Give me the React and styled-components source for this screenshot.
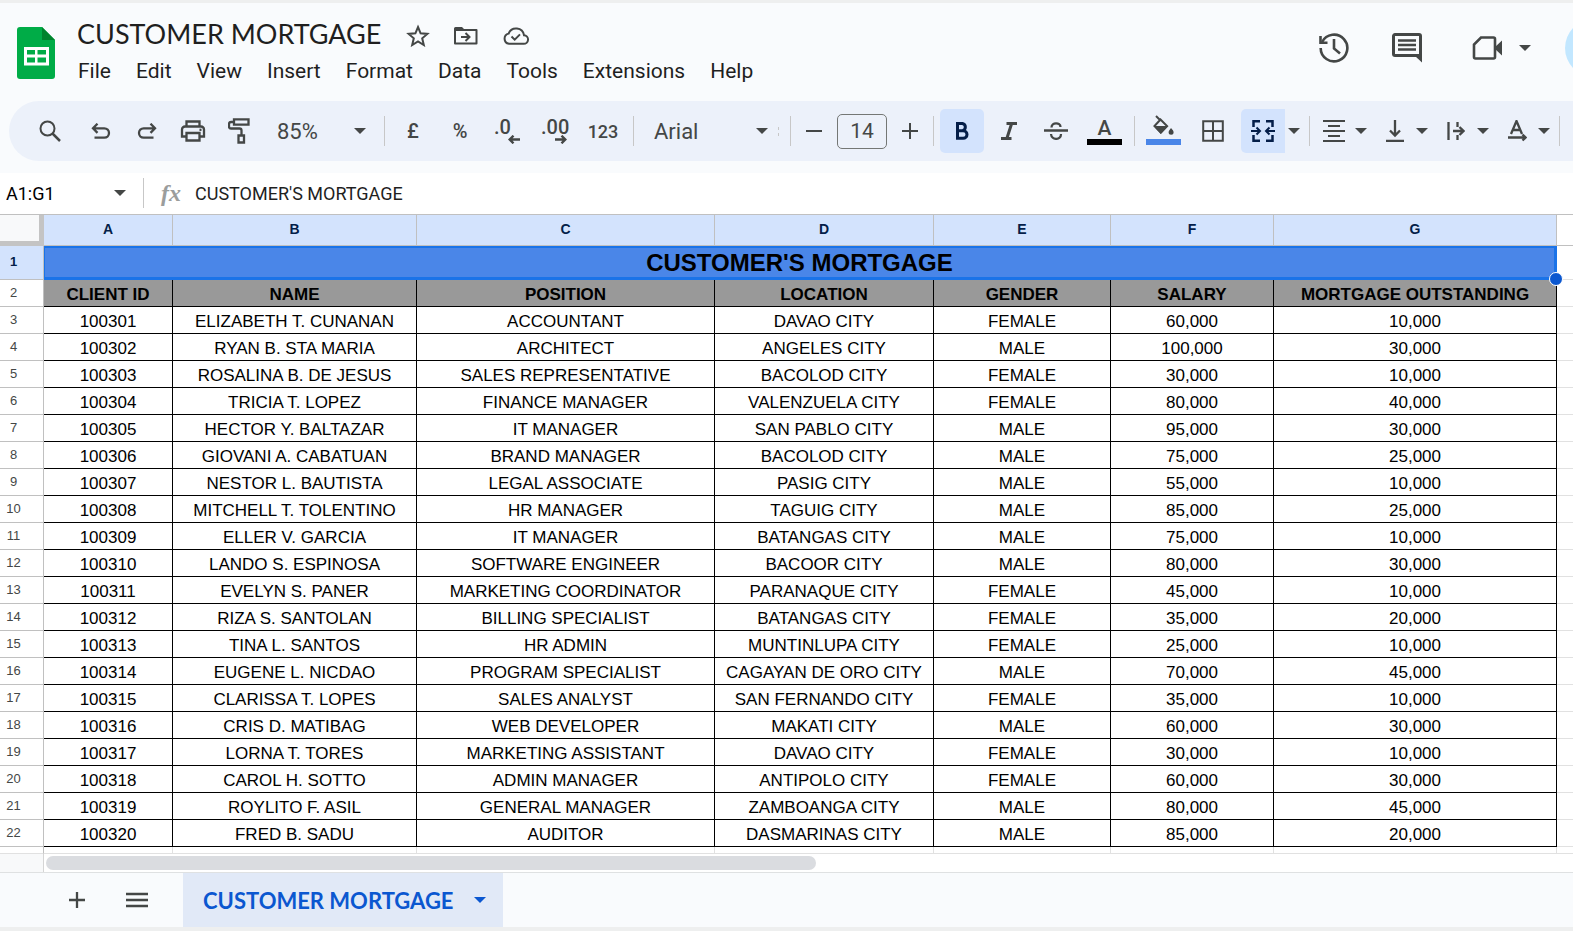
import React from "react";
import styled, { createGlobalStyle } from "styled-components";

const GlobalStyle = createGlobalStyle`
  body {
    margin: 0;
    background: #f9fbfd;
    overflow: hidden;
  }
  * {
    box-sizing: border-box;
  }
`;

const uiFont = `Roboto, "Liberation Sans", sans-serif`;
const cellFont = `"Liberation Sans", Arial, sans-serif`;

const Page = styled.div`
  min-height: 100vh;
  display: flex;
  flex-direction: column;
  border-top: 3px solid #eeefef;
  font-family: ${uiFont};
  color: #1f1f1f;
  overflow: hidden;
`;

const Header = styled.header`
  display: flex;
  align-items: flex-start;
  height: 98px;
  padding: 12px 0 0 17px;
`;

const Logo = styled.a`
  display: block;
  margin-top: 12px;
  height: 52px;
`;

const HeaderMain = styled.div`
  flex: 1;
  margin-left: 22px;
`;

const TitleRow = styled.div`
  display: flex;
  align-items: center;
  gap: 23px;
  height: 38px;
`;

const DocTitle = styled.input`
  width: 306px;
  padding: 0;
  border: 0;
  background: none;
  font-family: Lato, ${uiFont};
  font-size: 27px;
  line-height: 38px;
  color: #1f1f1f;
`;

const PlainButton = styled.button`
  display: flex;
  align-items: center;
  justify-content: center;
  padding: 0;
  border: 0;
  background: none;
  color: #444746;
`;

const TitleButton = styled(PlainButton)`
  padding-top: 3px;
`;

const Menu = styled.nav`
  display: flex;
  gap: 25px;
  padding: 4px 0 0 1px;
`;

const MenuItem = styled.button`
  padding: 0;
  border: 0;
  background: none;
  font-family: ${uiFont};
  font-size: 21px;
  line-height: 28px;
  color: #1f1f1f;
`;

const HeaderTools = styled.div`
  display: flex;
  align-items: center;
  height: 66px;
`;

const HeaderButton = styled(PlainButton)`
  height: 40px;
  margin-right: ${(p) => p.$after}px;
`;

const Avatar = styled.button`
  flex: none;
  width: 58px;
  height: 58px;
  margin-right: -50px;
  border: 0;
  border-radius: 50%;
  background: #c2e7ff;
`;

const Toolbar = styled.div`
  display: flex;
  align-items: center;
  height: 60px;
  margin: 0 0 12px 9px;
  padding-left: 19px;
  border-radius: 30px 0 0 30px;
  background: #ecf1fa;
`;

const Group = styled.div`
  display: flex;
  align-items: center;
  gap: ${(p) => p.$gap || 0}px;
`;

const Divider = styled.div`
  flex: none;
  width: 1px;
  height: 30px;
  margin: 0 6px;
  background: #c7c7c7;
`;

const DragMark = styled.div`
  flex: none;
  height: 9px;
  margin-right: 5px;
  border-left: 1px dashed #c7c7c7;
`;

const ToolButton = styled(PlainButton)`
  flex: none;
  width: ${(p) => p.$width || 44}px;
  height: 44px;
  border-radius: ${(p) => (p.$joined ? "5px 0 0 5px" : "5px")};
  background: ${(p) => (p.$on ? "#d3e3fd" : "none")};
  color: ${(p) => (p.$on ? "#041e49" : "#444746")};
  font-family: ${uiFont};
  font-size: ${(p) => p.$size || 18}px;
  font-weight: 500;
`;

const CaretButton = styled(PlainButton)`
  flex: none;
  width: ${(p) => p.$width || 18}px;
  height: 44px;
`;

const SelectWrap = styled.label`
  display: grid;
  align-items: center;
  width: ${(p) => p.$width}px;
  height: 44px;
  color: #444746;
  > * {
    grid-area: 1 / 1;
  }
  svg {
    justify-self: end;
    margin-right: ${(p) => p.$inset}px;
    pointer-events: none;
  }
`;

const Select = styled.select`
  appearance: none;
  width: 100%;
  height: 44px;
  padding: 0 0 0 14px;
  border: 0;
  background: none;
  font-family: ${uiFont};
  font-size: 22px;
  color: #444746;
`;

const SizeInput = styled.input`
  width: 50px;
  height: 35px;
  padding: 0;
  border: 1px solid #747775;
  border-radius: 5px;
  background: none;
  font-family: ${uiFont};
  font-size: 21px;
  text-align: center;
  color: #444746;
`;

const Decimal = styled.span`
  display: flex;
  flex-direction: column;
  width: 26px;
  font-size: 20px;
  line-height: 16px;
  text-align: left;
  svg {
    align-self: flex-end;
  }
`;

const ColorLabel = styled.span`
  display: flex;
  flex-direction: column;
  align-items: center;
  justify-content: flex-end;
  width: 35px;
  height: 32px;
  margin-bottom: 4px;
  border-bottom: 6px solid ${(p) => p.$color};
  font-size: 21px;
  line-height: 21px;
  svg {
    margin-bottom: 4px;
  }
`;

const FormulaBar = styled.div`
  display: flex;
  align-items: center;
  height: 42px;
  padding-bottom: 1px;
  border-bottom: 1px solid #c0c0c0;
  background: #fff;
`;

const NameBox = styled.input`
  width: 103px;
  padding: 0 0 0 6px;
  border: 0;
  background: none;
  font-family: ${uiFont};
  font-size: 18px;
  color: #000;
`;

const Fx = styled.span`
  width: 45px;
  padding-left: 11px;
  font-family: "Liberation Serif", serif;
  font-size: 24px;
  line-height: 30px;
  font-style: italic;
  font-weight: bold;
  color: #9b9d9c;
`;

const FormulaInput = styled.input`
  flex: 1;
  min-width: 0;
  padding: 0;
  border: 0;
  background: none;
  font-family: ${uiFont};
  font-size: 18px;
  color: #1f1f1f;
`;

const Grid = styled.table`
  width: 100%;
  table-layout: fixed;
  border-collapse: separate;
  border-spacing: 0;
  background: #fff;
  font-family: ${cellFont};
`;

const Corner = styled.td`
  height: 31px;
  padding: 0;
  background: #f8f9fa;
  border-right: 5px solid #c4c4c4;
  border-bottom: 5px solid #c4c4c4;
`;

const ColumnHead = styled.th`
  height: 31px;
  padding: 0 0 3px;
  border-right: 1px solid #c0c0c0;
  border-bottom: 1px solid #c0c0c0;
  background: #d3e3fd;
  font-size: 14px;
  color: #041e49;
`;

const RowHead = styled.th`
  padding: 0 16px 2px 0;
  border-right: 1px solid #c0c0c0;
  border-bottom: 1px solid #c0c0c0;
  background: ${(p) => (p.$on ? "#d3e3fd" : "#fff")};
  font-size: 13px;
  font-weight: ${(p) => (p.$on ? "bold" : "normal")};
  color: ${(p) => (p.$on ? "#041e49" : "#444746")};
`;

const Cell = styled.td`
  height: 27px;
  padding: 4px 0 0;
  border-right: 1px solid #000;
  border-bottom: 1px solid #000;
  background: ${(p) => (p.$heading ? "#999" : "#fff")};
  font-size: 17px;
  line-height: 20px;
  font-weight: ${(p) => (p.$heading ? "bold" : "normal")};
  text-align: center;
  white-space: nowrap;
  color: #000;
`;

const MergedCell = styled.td`
  position: relative;
  height: 34px;
  padding: 0;
  border: solid #1a73e8;
  border-width: 2px 3px 3px 1px;
  background: #4a86e8;
  font-size: 24px;
  line-height: 28px;
  font-weight: bold;
  text-align: center;
  color: #000;
`;

const FillHandle = styled.span`
  position: absolute;
  right: -9px;
  bottom: -9px;
  width: 14px;
  height: 14px;
  border: 1px solid #fff;
  border-radius: 50%;
  background: #0b57d0;
`;

const BlankCell = styled.td`
  padding: 0;
  border-bottom: 1px solid ${(p) => (p.$head ? "#c0c0c0" : "#e1e1e1")};
`;

const StubCell = styled.td`
  height: 7px;
  padding: 0;
  border-right: 1px solid ${(p) => (p.$head ? "#c0c0c0" : "#e1e1e1")};
  border-bottom: 1px solid #e1e1e1;
  &:last-child {
    border-right: 0;
  }
`;

const ScrollRow = styled.div`
  display: flex;
  align-items: center;
  height: 19px;
  border-bottom: 1px solid #dfe1e2;
  background: #fff;
`;

const ScrollCorner = styled.div`
  width: 44px;
  height: 18px;
  border-right: 1px solid #d5d5d5;
  background: #f8f9fa;
`;

const Track = styled.div`
  flex: 1;
  padding-left: 2px;
`;

const Thumb = styled.div`
  width: 50.4%;
  height: 14px;
  border-radius: 7px;
  background: #dadce0;
`;

const TabBar = styled.footer`
  display: flex;
  flex: 1;
  border-bottom: 4px solid #eeefef;
`;

const TabTool = styled(PlainButton)`
  width: 60px;
`;

const SheetTab = styled.button`
  display: flex;
  align-items: center;
  gap: 20px;
  margin-left: 16px;
  padding: 0 17px 0 20px;
  border: 0;
  background: #e1e9f7;
  font-family: Lato, ${uiFont};
  font-size: 22px;
  font-weight: bold;
  color: #0b57d0;
`;

const TabTools = styled.div`
  display: flex;
  padding-left: 47px;
`;

const Icon = ({ w, h, children, stroke = 2 }) => (
  <svg
    width={w}
    height={h}
    viewBox={`0 0 ${w} ${h}`}
    fill="none"
    stroke="currentColor"
    strokeWidth={stroke}
    aria-hidden="true"
  >
    {children}
  </svg>
);

const Caret = () => (
  <Icon w={12} h={6}>
    <path d="M0 0h12L6 6z" fill="currentColor" stroke="none" />
  </Icon>
);

const menus = ["File", "Edit", "View", "Insert", "Format", "Data", "Tools", "Extensions", "Help"];

const columns = [
  { letter: "A", label: "CLIENT ID", width: 129 },
  { letter: "B", label: "NAME", width: 244 },
  { letter: "C", label: "POSITION", width: 298 },
  { letter: "D", label: "LOCATION", width: 219 },
  { letter: "E", label: "GENDER", width: 177 },
  { letter: "F", label: "SALARY", width: 163 },
  { letter: "G", label: "MORTGAGE OUTSTANDING", width: 283 },
];

const clients = [
  ["100301", "ELIZABETH T. CUNANAN", "ACCOUNTANT", "DAVAO CITY", "FEMALE", "60,000", "10,000"],
  ["100302", "RYAN B. STA MARIA", "ARCHITECT", "ANGELES CITY", "MALE", "100,000", "30,000"],
  ["100303", "ROSALINA B. DE JESUS", "SALES REPRESENTATIVE", "BACOLOD CITY", "FEMALE", "30,000", "10,000"],
  ["100304", "TRICIA T. LOPEZ", "FINANCE MANAGER", "VALENZUELA CITY", "FEMALE", "80,000", "40,000"],
  ["100305", "HECTOR Y. BALTAZAR", "IT MANAGER", "SAN PABLO CITY", "MALE", "95,000", "30,000"],
  ["100306", "GIOVANI A. CABATUAN", "BRAND MANAGER", "BACOLOD CITY", "MALE", "75,000", "25,000"],
  ["100307", "NESTOR L. BAUTISTA", "LEGAL ASSOCIATE", "PASIG CITY", "MALE", "55,000", "10,000"],
  ["100308", "MITCHELL T. TOLENTINO", "HR MANAGER", "TAGUIG CITY", "MALE", "85,000", "25,000"],
  ["100309", "ELLER V. GARCIA", "IT MANAGER", "BATANGAS CITY", "MALE", "75,000", "10,000"],
  ["100310", "LANDO S. ESPINOSA", "SOFTWARE ENGINEER", "BACOOR CITY", "MALE", "80,000", "30,000"],
  ["100311", "EVELYN S. PANER", "MARKETING COORDINATOR", "PARANAQUE CITY", "FEMALE", "45,000", "10,000"],
  ["100312", "RIZA S. SANTOLAN", "BILLING SPECIALIST", "BATANGAS CITY", "FEMALE", "35,000", "20,000"],
  ["100313", "TINA L. SANTOS", "HR ADMIN", "MUNTINLUPA CITY", "FEMALE", "25,000", "10,000"],
  ["100314", "EUGENE L. NICDAO", "PROGRAM SPECIALIST", "CAGAYAN DE ORO CITY", "MALE", "70,000", "45,000"],
  ["100315", "CLARISSA T. LOPES", "SALES ANALYST", "SAN FERNANDO CITY", "FEMALE", "35,000", "10,000"],
  ["100316", "CRIS D. MATIBAG", "WEB DEVELOPER", "MAKATI CITY", "MALE", "60,000", "30,000"],
  ["100317", "LORNA T. TORES", "MARKETING ASSISTANT", "DAVAO CITY", "FEMALE", "30,000", "10,000"],
  ["100318", "CAROL H. SOTTO", "ADMIN MANAGER", "ANTIPOLO CITY", "FEMALE", "60,000", "30,000"],
  ["100319", "ROYLITO F. ASIL", "GENERAL MANAGER", "ZAMBOANGA CITY", "MALE", "80,000", "45,000"],
  ["100320", "FRED B. SADU", "AUDITOR", "DASMARINAS CITY", "MALE", "85,000", "20,000"],
];

function TopHeader() {
  return (
    <Header>
      <Logo href="#" aria-label="Sheets home">
        <svg width="38" height="52" viewBox="0 0 38 52" aria-hidden="true">
          <path d="M3 0h22l13 13v36a3 3 0 0 1-3 3H3a3 3 0 0 1-3-3V3a3 3 0 0 1 3-3z" fill="#00ac47" />
          <path d="M25 0l13 13H25z" fill="#00832d" />
          <path
            fill="#fff"
            fillRule="evenodd"
            d="M7 20h25v18.500H7zM10 23v4.500h8V23zM20.500 23v4.500h8.500V23zM10 30.500v5h8v-5zM20.500 30.500v5h8.500v-5z"
          />
        </svg>
      </Logo>
      <HeaderMain>
        <TitleRow>
          <DocTitle aria-label="Document title" defaultValue="CUSTOMER MORTGAGE" />
          <TitleButton aria-label="Star">
            <Icon w={24} h={23}>
              <path d="M12 3l2.600 6.300 6.800.600-5.200 4.400 1.600 6.700-5.800-3.600-5.800 3.600 1.600-6.700-5.200-4.400 6.800-.600z" />
            </Icon>
          </TitleButton>
          <TitleButton aria-label="Move">
            <Icon w={26} h={20}>
              <path d="M2 4h21.500v13.500H2z" strokeLinejoin="round" />
              <path d="M1 5V2.500A1.500 1.500 0 0 1 2.500 1H9l3 3v1z" fill="currentColor" stroke="none" />
              <path d="M8 11h8M12.500 7l4 4-4 4" />
            </Icon>
          </TitleButton>
          <TitleButton aria-label="Document status">
            <Icon w={28} h={20}>
              <path d="M7 17.800h14.500a4.300 4.300 0 0 0 .500-8.600 8 8 0 0 0-15.400-1.600A5.200 5.200 0 0 0 7 17.800z" />
              <path d="M9.500 10.500l3.200 3.200 5.300-5.300" />
            </Icon>
          </TitleButton>
        </TitleRow>
        <Menu>
          {menus.map((m) => (
            <MenuItem key={m}>{m}</MenuItem>
          ))}
        </Menu>
      </HeaderMain>
      <HeaderTools>
        <HeaderButton $after={43} aria-label="Version history">
          <Icon w={30} h={30} stroke={2.6}>
            <path d="M3.100 9A13.330 13.330 0 1 1 1.670 15" />
            <path d="M1.500 3v6.700h7" />
            <path d="M15 6v9.500l6 5" />
          </Icon>
        </HeaderButton>
        <HeaderButton $after={50} aria-label="Comments">
          <Icon w={30} h={30} stroke={3}>
            <path d="M3 1.500h24a1.500 1.500 0 0 1 1.500 1.500v19.500H3A1.500 1.500 0 0 1 1.500 21V3A1.500 1.500 0 0 1 3 1.500z" />
            <path d="M23 23h7v6.500z" fill="currentColor" stroke="none" />
            <path d="M6 7.500h18M6 12h18M6 16.500h18" strokeWidth="2.500" />
          </Icon>
        </HeaderButton>
        <HeaderButton $after={17} aria-label="Join a call">
          <Icon w={30} h={24} stroke={2.6}>
            <path d="M9 1.500h12.500A1.500 1.500 0 0 1 23 3v18a1.500 1.500 0 0 1-1.500 1.500H3.500A1.500 1.500 0 0 1 2 21V8.500z" />
            <path d="M22 12l8-7.500v15z" fill="currentColor" stroke="none" />
          </Icon>
        </HeaderButton>
        <HeaderButton $after={34} aria-label="Call options">
          <Caret />
        </HeaderButton>
        <Avatar aria-label="Account" />
      </HeaderTools>
    </Header>
  );
}

function FormatToolbar() {
  return (
    <Toolbar role="toolbar">
      <Group $gap={7}>
        <ToolButton aria-label="Search">
          <Icon w={22} h={22}>
            <circle cx="8.500" cy="8.500" r="7" />
            <path d="M13.500 13.500l7.500 7.500" strokeWidth="2.500" />
          </Icon>
        </ToolButton>
        <Group $gap={2}>
          <ToolButton aria-label="Undo">
            <Icon w={20} h={16}>
              <path d="M6.500.700L2 5.300l4.500 4.600M2.500 5.300h10.800a4.700 4.700 0 0 1 0 9.400H3.500" strokeWidth="2.300" />
            </Icon>
          </ToolButton>
          <ToolButton aria-label="Redo">
            <Icon w={20} h={16}>
              <path d="M13.500.700L18 5.300l-4.500 4.600M17.500 5.300H6.700a4.700 4.700 0 0 0 0 9.400h9.800" strokeWidth="2.300" />
            </Icon>
          </ToolButton>
          <ToolButton aria-label="Print">
            <Icon w={26} h={22} stroke={2.3}>
              <path d="M6.500 6V1.500h13V6M6 16.500H2V9.500a3 3 0 0 1 3-3h16a3 3 0 0 1 3 3v7h-4" />
              <path d="M6.500 13h13v7.500h-13z" />
              <path d="M19.500 9.800h2" />
            </Icon>
          </ToolButton>
          <ToolButton aria-label="Paint format">
            <Icon w={22} h={26} stroke={2.300}>
              <path d="M6 1.300h14.500v5.400H6zM6 4H3a2 2 0 0 0-2 2v2.500a2 2 0 0 0 2 2h8.500a2 2 0 0 1 2 2V17M10.500 17.500h5.500v7h-5.500z" />
            </Icon>
          </ToolButton>
          <SelectWrap $width={115} $inset={12}>
            <Select aria-label="Zoom" defaultValue="85%">
              <option>85%</option>
              <option>100%</option>
            </Select>
            <Caret />
          </SelectWrap>
        </Group>
      </Group>
      <Divider />
      <Group $gap={3}>
        <ToolButton $size={20} aria-label="Format as currency">£</ToolButton>
        <ToolButton $size={20} aria-label="Format as percent">%</ToolButton>
        <ToolButton aria-label="Decrease decimal places">
          <Decimal>
            .0
            <Icon w={12} h={9} stroke={2.400}>
              <path d="M5.500.700L1.700 4.500l3.800 3.800M2 4.500h10" />
            </Icon>
          </Decimal>
        </ToolButton>
        <ToolButton aria-label="Increase decimal places">
          <Decimal>
            .00
            <Icon w={12} h={9} stroke={2.400}>
              <path d="M6.500.700l3.800 3.800-3.800 3.800M10 4.500H0" />
            </Icon>
          </Decimal>
        </ToolButton>
        <ToolButton $width={48} aria-label="More formats">123</ToolButton>
      </Group>
      <Divider />
      <SelectWrap $width={138} $inset={10}>
        <Select aria-label="Font" defaultValue="Arial">
          <option>Arial</option>
          <option>Roboto</option>
        </Select>
        <Caret />
      </SelectWrap>
      <DragMark />
      <Divider />
      <Group $gap={6}>
        <ToolButton $width={34} aria-label="Decrease font size">
          <Icon w={16} h={16}>
            <path d="M0 8h16" />
          </Icon>
        </ToolButton>
        <SizeInput aria-label="Font size" defaultValue="14" />
        <ToolButton $width={34} aria-label="Increase font size">
          <Icon w={16} h={16}>
            <path d="M0 8h16M8 0v16" />
          </Icon>
        </ToolButton>
      </Group>
      <Divider />
      <Group $gap={3}>
        <ToolButton $on aria-label="Bold">
          <Icon w={14} h={18} stroke={3}>
            <path d="M2.500 1.500h5a3.700 3.700 0 0 1 0 7.200h-5zM2.500 8.700h5.700a3.800 3.800 0 0 1 0 7.600H2.500z" />
          </Icon>
        </ToolButton>
        <ToolButton aria-label="Italic">
          <Icon w={16} h={18} stroke={3}>
            <path d="M5.500 1.500H16M0 16.500h10.500M10.500 2L6 16" />
          </Icon>
        </ToolButton>
        <ToolButton aria-label="Strikethrough">
          <Icon w={24} h={18} stroke={2.300}>
            <path d="M0 8.500h24M7.500 5.500C7.500 0 16.500 0 16.500 5M7 12c.500 6.500 10 6.500 10 0" />
          </Icon>
        </ToolButton>
        <ToolButton $width={47} aria-label="Text colour">
          <ColorLabel $color="#000">A</ColorLabel>
        </ToolButton>
      </Group>
      <Divider />
      <Group $gap={6}>
        <ToolButton aria-label="Fill colour">
          <ColorLabel $color="#4a86e8">
            <Icon w={22} h={20}>
              <path d="M4 1l4 4M8.500 4.500L2.500 11l6.300 6.500L15 11z" />
              <path d="M1.500 11h15l-7.700 8z" fill="currentColor" stroke="none" />
              <path d="M19 13c2 2.400 2.600 3.200 2.600 4.200a2.500 2.500 0 0 1-5 0c0-1 .800-2 2.400-4.200z" fill="currentColor" stroke="none" />
            </Icon>
          </ColorLabel>
        </ToolButton>
        <ToolButton aria-label="Borders">
          <Icon w={22} h={22}>
            <path d="M1.200 1.200h19.600v19.600H1.200zM11 1v20M1 11h20" />
          </Icon>
        </ToolButton>
        <Group>
          <ToolButton $on $joined aria-label="Merge cells">
            <Icon w={24} h={22}>
              <path d="M9 1.200H2.500V7M9 20.800H2.500V15M15 1.200h6.500V7M15 20.800h6.500V15" strokeWidth="2.500" />
              <path d="M0 11h8.500M5.500 7.500L9 11l-3.500 3.500M24 11h-8.500M18.500 7.500L15 11l3.500 3.500" />
            </Icon>
          </ToolButton>
          <CaretButton aria-label="Merge type">
            <Caret />
          </CaretButton>
        </Group>
      </Group>
      <Divider />
      <Group $gap={7}>
        <Group>
          <ToolButton $width={36} aria-label="Horizontal align">
            <Icon w={22} h={22}>
              <path d="M0 1h22M5 6h12M0 11h22M5 16h12M0 21h22" />
            </Icon>
          </ToolButton>
          <CaretButton aria-label="Horizontal align options">
            <Caret />
          </CaretButton>
        </Group>
        <Group>
          <ToolButton $width={36} aria-label="Vertical align">
            <Icon w={18} h={22}>
              <path d="M0 21h18M9 0v15M4 10.500l5 5 5-5" strokeWidth="2.300" />
            </Icon>
          </ToolButton>
          <CaretButton aria-label="Vertical align options">
            <Caret />
          </CaretButton>
        </Group>
        <Group>
          <ToolButton $width={36} aria-label="Text wrapping">
            <Icon w={18} h={18} stroke={2.300}>
              <path d="M1.500 0v18M10.500 0v5M10.500 13v5M6 9h10.500M12.500 5l4 4-4 4" />
            </Icon>
          </ToolButton>
          <CaretButton aria-label="Text wrapping options">
            <Caret />
          </CaretButton>
        </Group>
        <Group>
          <ToolButton $width={36} aria-label="Text rotation">
            <Icon w={19} h={22} stroke={2.300}>
              <path d="M3 14L8.500 1 14 14M5 10h7M0 17.500h17M14.500 14.500l3 3-3 3" />
            </Icon>
          </ToolButton>
          <CaretButton aria-label="Text rotation options">
            <Caret />
          </CaretButton>
        </Group>
      </Group>
      <Divider />
    </Toolbar>
  );
}

function SheetGrid() {
  return (
    <Grid>
      <colgroup>
        <col width="44" />
        {columns.map((c) => (
          <col key={c.letter} width={c.width} />
        ))}
        <col />
      </colgroup>
      <thead>
        <tr>
          <Corner />
          {columns.map((c) => (
            <ColumnHead key={c.letter} scope="col">
              {c.letter}
            </ColumnHead>
          ))}
          <BlankCell $head />
        </tr>
      </thead>
      <tbody>
        <tr>
          <RowHead $on scope="row">1</RowHead>
          <MergedCell colSpan={columns.length}>
            CUSTOMER'S MORTGAGE
            <FillHandle />
          </MergedCell>
          <BlankCell />
        </tr>
        <tr>
          <RowHead scope="row">2</RowHead>
          {columns.map((c) => (
            <Cell key={c.letter} $heading>
              {c.label}
            </Cell>
          ))}
          <BlankCell />
        </tr>
        {clients.map((client, i) => (
          <tr key={client[0]}>
            <RowHead scope="row">{i + 3}</RowHead>
            {client.map((value, j) => (
              <Cell key={columns[j].letter}>{value}</Cell>
            ))}
            <BlankCell />
          </tr>
        ))}
        <tr>
          <StubCell $head />
          {columns.map((c) => (
            <StubCell key={c.letter} />
          ))}
          <StubCell />
        </tr>
      </tbody>
    </Grid>
  );
}

export default function App() {
  return (
    <Page>
      <GlobalStyle />
      <TopHeader />
      <FormatToolbar />
      <FormulaBar>
        <NameBox aria-label="Name box" defaultValue="A1:G1" />
        <CaretButton $width={34} aria-label="Named ranges">
          <Caret />
        </CaretButton>
        <Divider />
        <Fx>fx</Fx>
        <FormulaInput aria-label="Formula" defaultValue="CUSTOMER'S MORTGAGE" />
      </FormulaBar>
      <SheetGrid />
      <ScrollRow>
        <ScrollCorner />
        <Track>
          <Thumb />
        </Track>
      </ScrollRow>
      <TabBar>
        <TabTools>
          <TabTool aria-label="Add sheet">
            <Icon w={16} h={16} stroke={2.300}>
              <path d="M0 8h16M8 0v16" />
            </Icon>
          </TabTool>
          <TabTool aria-label="All sheets">
            <Icon w={22} h={16} stroke={2.500}>
              <path d="M0 2h22M0 8h22M0 14h22" />
            </Icon>
          </TabTool>
        </TabTools>
        <SheetTab>
          CUSTOMER MORTGAGE
          <Caret />
        </SheetTab>
      </TabBar>
    </Page>
  );
}
